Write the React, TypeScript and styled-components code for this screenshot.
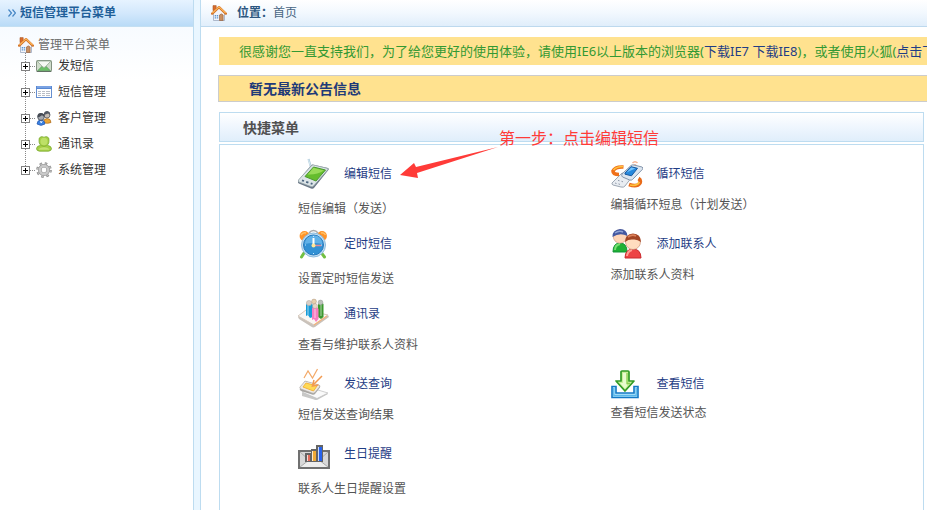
import React from "react";
import styled, { createGlobalStyle } from "styled-components";

const GlobalStyle = createGlobalStyle`
  * { box-sizing: border-box; }
  body {
    margin: 0;
    background: #fff;
    color: #555;
    font: 12px/18px "Noto Sans", "Noto Sans CJK SC", sans-serif;
    overflow: hidden;
  }
  a { color: inherit; text-decoration: none; }
  svg { display: block; flex: none; }
`;

const Page = styled.div`
  display: grid;
  grid-template-columns: 194px 6px minmax(0, 1fr);
  height: 100vh;
`;

const Sidebar = styled.aside`
  border-right: 1px solid #bddcf0;
  background: linear-gradient(#f3f9ff, #fff 80px);
`;

const Splitter = styled.div`
  background: #e9f6ff;
`;

const Main = styled.main`
  display: flex;
  flex-direction: column;
  border-left: 1px solid #bddcf0;
  overflow: hidden;
`;

const SidebarHeader = styled.header`
  display: flex;
  align-items: center;
  gap: 4px;
  height: 27px;
  padding-left: 8px;
  border-bottom: 1px solid #c3dff2;
  background: linear-gradient(#e6f3ff, #d3e8fc 50%, #b9dbf7);
`;

const SidebarTitle = styled.h1`
  margin: 0;
  color: #1f5f99;
  font-size: 12px;
  line-height: 18px;
`;

const Tree = styled.nav`
  padding: 10px 0 0 18px;
  color: #333;
`;

const TreeRoot = styled.div`
  display: flex;
  align-items: center;
  gap: 4px;
  height: 16px;
  color: #6b6b6b;
  line-height: 16px;
`;

const TreeList = styled.ul`
  margin: 0;
  padding: 0;
  list-style: none;
`;

const TreeItem = styled.li`
  display: flex;
  align-items: center;
  height: 26px;
`;

const TreeBranch = styled.span<{ $last: boolean }>`
  width: 18px;
  height: 26px;
  padding: 9px 0 0 3px;
  background:
    repeating-linear-gradient(#888 0 1px, transparent 1px 2px) 7px 0 / 1px ${(p) => (p.$last ? "13px" : "26px")} no-repeat,
    repeating-linear-gradient(90deg, #888 0 1px, transparent 1px 2px) 12px 13px / 6px 1px no-repeat;
`;

const Toggle = styled.button`
  display: block;
  width: 9px;
  height: 9px;
  padding: 0;
  border: 1px solid #808080;
  background:
    linear-gradient(#000, #000) center / 5px 1px no-repeat,
    linear-gradient(#000, #000) center / 1px 5px no-repeat,
    #fff;
`;

const TreeLink = styled.a`
  display: flex;
  align-items: center;
  gap: 6px;
`;

const LocationBar = styled.header`
  display: flex;
  align-items: center;
  flex: none;
  gap: 10px;
  height: 27px;
  padding-left: 10px;
  border-bottom: 1px solid #bdd9ee;
  background: linear-gradient(#fff, #f2f8fe 50%, #e0eefb);
  color: #476583;
`;

const LocationLabel = styled.strong`
  color: #2c5680;
`;

const Thanks = styled.p`
  flex: none;
  height: 28px;
  margin: 10px 0 0 18px;
  padding-left: 20px;
  background: #ffe28f;
  color: #339933;
  font-size: 13px;
  line-height: 28px;
  white-space: nowrap;
`;

const NoticeLink = styled.a`
  color: #1f3d85;
`;

const Announcement = styled.p`
  flex: none;
  height: 27px;
  margin: 10px 0 0 17px;
  padding-left: 30px;
  border: 1px solid #ccc;
  border-right: 0;
  background: #ffe28f;
  color: #1f3a78;
  font-size: 14px;
  font-weight: 700;
  line-height: 26px;
`;

const PanelTitle = styled.h2`
  flex: none;
  height: 30px;
  margin: 10px 3px 0 18px;
  padding-left: 23px;
  border: 1px solid #bddcf0;
  background: linear-gradient(#fff, #eff6fe 50%, #e0eefb);
  color: #505050;
  font-size: 14px;
  line-height: 30px;
`;

const PanelBody = styled.section`
  position: relative;
  flex: 1 0 auto;
  margin: 2px 3px 0 18px;
  padding: 13px 0 0 78px;
  border: 1px solid #bddcf0;
  border-bottom: 0;
`;

const Shortcuts = styled.div`
  display: grid;
  grid-template-columns: 1fr 1fr;
  grid-auto-rows: 70px;
`;

const Shortcut = styled.div<{ $column: number; $gap: number }>`
  display: flex;
  flex-direction: column;
  grid-column: ${(p) => p.$column};
  gap: ${(p) => p.$gap}px;
`;

const ShortcutLink = styled.a`
  display: flex;
  align-items: center;
  gap: 14px;
  height: 32px;
  color: #1f3d85;
`;

const Annotation = styled.div`
  position: absolute;
  top: -19px;
  left: 180px;
  display: flex;
  align-items: flex-start;
  color: #ff3b38;
  font-size: 16px;
  line-height: 24px;
  white-space: nowrap;
  pointer-events: none;
`;

const HomeIcon = () => (
  <svg width="16" height="16" viewBox="0 0 16 16" aria-hidden="true">
    <path d="M2 .6h3.2v5H2z" fill="#d96b2b" stroke="#a95726" strokeWidth=".6" />
    <path d="M2.5 8 8 3l5.5 5v7.5h-11z" fill="#f3f5fa" stroke="#9caac0" strokeWidth=".8" />
    <path d="M1.2 8.6 8 2.2l6.8 6.4" fill="none" stroke="#d27327" strokeWidth="2.4" strokeLinejoin="round" strokeLinecap="round" />
    <path d="M1.4 8 8 1.9 14.6 8" fill="none" stroke="#ffb75b" strokeWidth="1.1" />
    <path d="M8.5 15.5V10q1.8-2.2 3.6 0v5.5z" fill="#c99062" stroke="#9a6642" strokeWidth=".7" />
    <path d="M3.7 10h1.4v1.4H3.7zm2.1 0h1.4v1.4H5.8zm-2.1 2.2h1.4v1.4H3.7zm2.1 0h1.4v1.4H5.8z" fill="#5a96d2" />
  </svg>
);

const ChevronIcon = () => (
  <svg width="8" height="8" viewBox="0 0 8 8" aria-hidden="true">
    <path d="m.5.5 3 3.5-3 3.5M4.5.5l3 3.5-3 3.5" fill="none" stroke="#4686c4" strokeWidth="1.2" />
  </svg>
);

const MailIcon = () => (
  <svg width="16" height="16" viewBox="0 0 16 16" aria-hidden="true">
    <rect x=".5" y="2.5" width="15" height="11" rx="1" fill="#cfdccb" stroke="#829081" />
    <path d="m1.5 12.8 5-5q1.5 1.2 3 0l5 5z" fill="#6cc067" stroke="#53905a" strokeWidth=".6" />
    <path d="M1 3h14L9.2 9q-1.2 1-2.4 0z" fill="#f5f9f4" stroke="#91a790" strokeWidth=".8" />
    <path d="M.8 13.5h14.4" stroke="#637064" />
  </svg>
);

const TableIcon = () => (
  <svg width="16" height="16" viewBox="0 0 16 16" aria-hidden="true">
    <rect x=".5" y="2.5" width="15" height="11" fill="#fff" stroke="#668fd0" />
    <path d="M0 2h16v3H0z" fill="#5888d3" />
    <path d="M1 3h14" stroke="#9cbdf2" />
    <path d="M2 7h3v1H2zm4 0h3v1H6zm4 0h4v1h-4zM2 9h3v1H2zm4 0h3v1H6zm4 0h4v1h-4zM2 11h3v1H2zm4 0h3v1H6zm4 0h4v1h-4z" fill="#b9bdc5" />
  </svg>
);

const CustomersIcon = () => (
  <svg width="16" height="16" viewBox="0 0 16 16" aria-hidden="true">
    <path d="M7.5 12.5q0-4 3.7-4 3.6 0 3.8 4-3.7 1.7-7.5 0" fill="#eda735" stroke="#aa681e" strokeWidth=".7" />
    <circle cx="11" cy="5" r="3" fill="#c6bdb5" stroke="#454b53" strokeWidth=".7" />
    <path d="M8 5Q7.7 1 11.3 1q3.2.4 2.8 4l-2-1.5z" fill="#535963" />
    <path d="M1 14q.2-4 4-4t4 4q-4 2.8-8 0" fill="#3b82e2" stroke="#2756ac" strokeWidth=".7" />
    <circle cx="5" cy="7" r="3.3" fill="#a5a9af" stroke="#3b414a" strokeWidth=".7" />
    <path d="M1.6 7.2Q1 3 4.9 3q3.8 0 3.7 4L6 5.2 3.3 7z" fill="#464b54" />
    <path d="m4.5 11 .7 2 1-2" stroke="#e8f2ff" fill="none" />
  </svg>
);

const ContactsIcon = () => (
  <svg width="16" height="16" viewBox="0 0 16 16" aria-hidden="true">
    <path d="M.5 12.5q.3-2.6 4.2-3.2Q2.6 7.2 3 4.4 2.6 1.4 5 .8q1.6-.5 3 .5Q9.400.3 11 .8q2.400.6 2 3.600.4 2.800-1.700 4.900 3.900.6 4.200 3.200.1 2.300-3 2.700h-9q-3.100-.4-3-2.700" fill="#a5cf45" stroke="#7eac36" strokeWidth=".8" />
    <ellipse cx="8" cy="5.500" rx="3.500" ry="3.700" fill="#bde067" />
    <path d="M2.500 13.800q1-2.600 5.500-2.600t5.500 2.600z" fill="#c4e272" />
    <path d="M5.300 9.600q2.700 1.500 5.400 0" stroke="#7fac2c" fill="none" strokeWidth=".8" />
  </svg>
);

const GearIcon = () => (
  <svg width="16" height="16" viewBox="0 0 16 16" aria-hidden="true">
    <circle cx="8" cy="8" r="6.4" fill="none" stroke="#8b8b8b" strokeWidth="2.8" strokeDasharray="2.4 2.627" />
    <circle cx="8" cy="8" r="4.2" fill="none" stroke="#909090" strokeWidth="3.6" />
    <circle cx="8" cy="8" r="4.1" fill="none" stroke="#c9c9c9" strokeWidth="2.6" />
    <circle cx="8" cy="8" r="6.4" fill="none" stroke="#bdbdbd" strokeWidth="1.6" strokeDasharray="1.4 3.627" strokeDashoffset="-.5" />
  </svg>
);

const PdaIcon = () => (
  <svg width="32" height="32" viewBox="0 0 32 32" aria-hidden="true">
    <path d="m13.5 11-3-10" stroke="#a9c7d8" strokeWidth="2" />
    <path d="m13 10-2.500-8.500" stroke="#e8f5fb" strokeWidth=".8" />
    <path d="M0 22.500 13 7.500q1-1.200 2.500-.8L30 10q1.300.6.4 2L16 30q-1 1.200-3 .5L.8 25.500Q-.5 24.500 0 22.500" fill="#6b7887" />
    <path d="M.5 22 13.500 7.700q1-.9 2.200-.6L29.500 10.400q1 .6.2 1.400L15.500 28q-.8 1-2.500.5L1 24Q0 23.300.5 22" fill="#dce4e7" stroke="#9baaae" strokeWidth=".7" />
    <path d="m7 18.500 8.500-9.500 12 3-9.500 11z" fill="#65bd2d" stroke="#4b9930" />
    <path d="m9.500 16.500 6-6.800 10.500 2.800q-7 4.600-16.500 4" fill="#98db58" />
    <path d="m4 22.300 2 .7m2.200.8 2.200.8m2.300.7 1.800.6" stroke="#4b657f" strokeWidth="1.800" />
  </svg>
);

const SyncPhoneIcon = () => (
  <svg width="32" height="32" viewBox="0 0 32 32" aria-hidden="true">
    <path d="M21.500 5q2.500-2.500 5 0M23 7.200q1-1 2 0" fill="none" stroke="#f6b595" strokeWidth="1.500" />
    <path d="M12.500 9Q4 8.500 2 13q0 3.500 6 3.500" fill="none" stroke="#ef701a" strokeWidth="3.600" />
    <path d="M12 8.500Q5.500 8.500 2.500 12" fill="none" stroke="#ffc23c" strokeWidth="1.600" />
    <path d="M18 26.500q8 3 11-1.500 1-3-1.500-4.500" fill="none" stroke="#e86a19" strokeWidth="3.800" />
    <path d="M19 27q7 1.500 9.500-3" fill="none" stroke="#ffc23c" strokeWidth="1.600" />
    <path d="m1 25 10-10 11 2.500-8 10.500q-1.400 1.800-4 1L2 27q-1.400-.6-1-2" fill="#e9edf2" stroke="#9ea8b4" />
    <path d="m11 16 9-8.500q1-1 3-.5l8 2q1.700.8.6 2.200L21.500 21.500q-1 1-2.800.5L11.600 19q-1.500-.9-.6-3" fill="#dce5ef" stroke="#8496ac" />
    <path d="m14 15 6-6.300 6.500 1.600-6 7.500-6.500-1.600z" fill="#2688dc" stroke="#17589f" />
    <path d="m15.500 14.500 4.800-4.900 4 1z" fill="#74c4ff" />
    <path d="m4 25 1.500.5m2 .4 1.500.5m-2-4 1.500.4m2 .5 1.500.5" stroke="#929baa" />
  </svg>
);

const AlarmIcon = () => (
  <svg width="32" height="32" viewBox="0 0 32 32" aria-hidden="true">
    <path d="M6 25 3.500 29m20-4 3 4" stroke="#72bf43" strokeWidth="3" strokeLinecap="round" />
    <path d="M11 5q2-2.500 4.500-2.500T20 5" fill="none" stroke="#aaa" strokeWidth="1.500" />
    <circle cx="6.500" cy="8" r="4.900" fill="#ff9328" />
    <circle cx="24" cy="8" r="4.900" fill="#ff9328" />
    <path d="M3 7q2-3 5-2m15 0q3-.7 4.500 2" fill="none" stroke="#ffc267" strokeWidth="1.500" />
    <circle cx="15.500" cy="17" r="12" fill="#c5dff1" stroke="#8bbadd" />
    <circle cx="15.500" cy="17" r="10" fill="#3291d4" stroke="#2478bd" />
    <path d="M6.500 16q1-8 9-8.500t9 8.500q-9-2-18 0" fill="#60b1e8" />
    <path d="M15.500 17v-7" stroke="#fff" strokeWidth="2" />
    <path d="M15.500 17.500h8" stroke="#e08b98" strokeWidth="1.500" />
    <circle cx="15.500" cy="17.500" r="2" fill="#ffe899" />
    <path d="M15.500 8v1m0 16v1M7 17h1m15 0h1" stroke="#c6eaff" />
  </svg>
);

const PeopleIcon = () => (
  <svg width="32" height="32" viewBox="0 0 32 32" aria-hidden="true">
    <path d="M2 24q0-9 7-9t7 9z" fill="#1fb035" stroke="#109538" />
    <path d="M4 22q0-5 5-6" fill="none" stroke="#76df70" strokeWidth="2" />
    <circle cx="9" cy="8.500" r="6.700" fill="#ffd5b7" stroke="#c69079" strokeWidth=".6" />
    <path d="M1.500 9Q1 2 9 1q7.200.4 7.500 7-7.500-4-15 1" fill="#4459a1" />
    <path d="M4 5q4-3 8-1" fill="none" stroke="#91a4d4" strokeWidth="1.500" />
    <path d="M14 30q.2-9 8-9t8 9z" fill="#ed4345" stroke="#ca2a2e" />
    <path d="M16 28q.5-5 5-6" fill="none" stroke="#ff9f94" strokeWidth="2" />
    <circle cx="22" cy="14" r="7.500" fill="#ffdcbf" stroke="#c2866b" strokeWidth=".6" />
    <path d="M14 14Q14 6 22 5.500q7.800.4 8 8.500-4-3-8-2.400-4-.5-8 2.400" fill="#a34525" />
    <path d="M17 9q4-3 8-1" fill="none" stroke="#dc815a" strokeWidth="1.700" />
  </svg>
);

const AddressBookIcon = () => (
  <svg width="32" height="32" viewBox="0 0 32 32" aria-hidden="true">
    <path d="m0 19 8-5 22 3 1 2-14 10q-2 1-4-.5L1 21z" fill="#c9c2bb" />
    <path d="m0 18 8-6 22 5-14 10z" fill="#faf7f4" stroke="#d4c7bb" />
    <path d="M8 7q0-2 3-2t4 2v12l-3 1-2-3-2 1z" fill="#169bd8" />
    <path d="M20 7q0-2 3-2t2.500 2v12l-2.500 2-3-2z" fill="#3b982e" />
    <path d="M14 11q0-2.300 3-2.300t3.500 2.300v10l-2.500 3-2-3-2 1z" fill="#f77cc0" />
    <path d="M10 7v10m7-6v9m6-13v11" stroke="#fff" strokeOpacity=".4" strokeWidth="1.500" />
    <circle cx="11" cy="5" r="2.600" fill="#d8cec5" stroke="#b3a79c" strokeWidth=".5" />
    <circle cx="17" cy="8" r="2.500" fill="#e8d6c5" stroke="#b3a292" strokeWidth=".5" />
    <circle cx="16" cy="3.500" r="2.400" fill="#e8d0ae" stroke="#aa947d" strokeWidth=".5" />
    <circle cx="22.500" cy="4.500" r="2.400" fill="#bec2bd" stroke="#969696" strokeWidth=".5" />
    <path d="m16 27 13-9" stroke="#f3b37c" strokeWidth="1.400" />
  </svg>
);

const QueryIcon = () => (
  <svg width="32" height="32" viewBox="0 0 32 32" aria-hidden="true">
    <path d="m4 25 6-5 20 6-10 5.500q-2 1-4 0L4 28z" fill="#c8c8c7" />
    <path d="m4 24 6-5 20 6-11 5.500z" fill="#fafafa" stroke="#bdbdbd" strokeWidth=".7" />
    <path d="m2 20 5-7 14 4q2 .8 1 2.500L17 26q-1 1.200-3 .6L3 23q-2-1-1-3" fill="#a9a7a3" />
    <path d="m2 19 5-6 14 4q1.300.6.5 2L17 24.500q-1 1-3 .5L3 21q-2-.8-1-2" fill="#ece9e5" stroke="#aaa5a0" strokeWidth=".6" />
    <path d="m5 19 3-4 11 3-3.500 5z" fill="#ffda55" stroke="#f5b53c" />
    <path d="m6 10 4-7 4.500 7 5-9" fill="none" stroke="#f3a968" strokeWidth="1.200" />
    <path d="m24 8-9 9m1-5-1.600 6 6-1" fill="none" stroke="#f29a50" strokeWidth="1.500" />
  </svg>
);

const DownloadIcon = () => (
  <svg width="32" height="32" viewBox="0 -2 32 32" aria-hidden="true">
    <path d="M1 16.500h4V23h18v-6.500h4v11H1z" fill="#b7e7fc" stroke="#1379c5" strokeWidth="1.600" />
    <path d="M2.800 18v7.500h22.400V18" fill="none" stroke="#58b7ea" strokeWidth="1.300" />
    <path d="M10 2q0-1 1-1h6q1 0 1 1v9h5l-9 10-9-10h5z" fill="#c9ef9c" stroke="#329b26" strokeWidth="1.700" strokeLinejoin="round" />
    <path d="M12 3v10H9l5 5.500 2-2.500V3z" fill="#e9fbcf" />
    <path d="M16 3v10.500h3" fill="none" stroke="#89ce50" strokeWidth="1.300" />
  </svg>
);

const BirthdayIcon = () => (
  <svg width="32" height="32" viewBox="0 0 32 32" aria-hidden="true">
    <rect x="1" y="13" width="30" height="17" fill="#d8d8d8" stroke="#707070" strokeWidth="2" />
    <path d="m2 29 9-7h10l9 7z" fill="#ededed" />
    <path d="m2 29 9-7h10l9 7M2 14l9 8m19-8-9 8" fill="none" stroke="#aaa" />
    <path d="M7 15h6v-4h5V7h7v17H7z" fill="#646464" />
    <path d="M9 17h3v6H9z" fill="#e36c5b" />
    <path d="M14 13h4v10h-4z" fill="#efa936" />
    <path d="M20 9h4v14h-4z" fill="#2763ed" />
    <path d="M9 17h1v6H9zm5-4h1v10h-1zm6-4h1v14h-1z" fill="#fff" fillOpacity=".75" />
  </svg>
);

const ArrowIcon = () => (
  <svg width="99" height="56" viewBox="0 0 99 56" aria-hidden="true">
    <path d="m0 49 14-12 2 4 82-20-81 26 1 5z" fill="#ff3b38" />
  </svg>
);

const treeItems = [
  { label: "发短信", icon: <MailIcon /> },
  { label: "短信管理", icon: <TableIcon /> },
  { label: "客户管理", icon: <CustomersIcon /> },
  { label: "通讯录", icon: <ContactsIcon /> },
  { label: "系统管理", icon: <GearIcon /> },
];

const shortcuts = [
  { title: "编辑短信", text: "短信编辑（发送）", column: 1, gap: 10, icon: <PdaIcon /> },
  { title: "循环短信", text: "编辑循环短息（计划发送）", column: 2, gap: 6, icon: <SyncPhoneIcon /> },
  { title: "定时短信", text: "设置定时短信发送", column: 1, gap: 10, icon: <AlarmIcon /> },
  { title: "添加联系人", text: "添加联系人资料", column: 2, gap: 6, icon: <PeopleIcon /> },
  { title: "通讯录", text: "查看与维护联系人资料", column: 1, gap: 6, icon: <AddressBookIcon /> },
  { title: "发送查询", text: "短信发送查询结果", column: 1, gap: 6, icon: <QueryIcon /> },
  { title: "查看短信", text: "查看短信发送状态", column: 2, gap: 4, icon: <DownloadIcon /> },
  { title: "生日提醒", text: "联系人生日提醒设置", column: 1, gap: 10, icon: <BirthdayIcon /> },
];

export default function App() {
  return (
    <>
      <GlobalStyle />
      <Page lang="zh-CN">
        <Sidebar>
          <SidebarHeader>
            <ChevronIcon />
            <SidebarTitle>短信管理平台菜单</SidebarTitle>
          </SidebarHeader>
          <Tree>
            <TreeRoot>
              <HomeIcon />
              管理平台菜单
            </TreeRoot>
            <TreeList>
              {treeItems.map((item, i) => (
                <TreeItem key={item.label}>
                  <TreeBranch $last={i === treeItems.length - 1}>
                    <Toggle type="button" aria-label={item.label} aria-expanded="false" />
                  </TreeBranch>
                  <TreeLink href="#">
                    {item.icon}
                    {item.label}
                  </TreeLink>
                </TreeItem>
              ))}
            </TreeList>
          </Tree>
        </Sidebar>
        <Splitter />
        <Main>
          <LocationBar>
            <HomeIcon />
            <span>
              <LocationLabel>位置：</LocationLabel>首页
            </span>
          </LocationBar>
          <Thanks>
            很感谢您一直支持我们，为了给您更好的使用体验，请使用IE6以上版本的浏览器(
            <NoticeLink href="#">下载IE7</NoticeLink> <NoticeLink href="#">下载IE8</NoticeLink>
            )，或者使用火狐(<NoticeLink href="#">点击下载</NoticeLink>)
          </Thanks>
          <Announcement>暂无最新公告信息</Announcement>
          <PanelTitle>快捷菜单</PanelTitle>
          <PanelBody>
            <Shortcuts>
              {shortcuts.map((s) => (
                <Shortcut key={s.title} $column={s.column} $gap={s.gap}>
                  <ShortcutLink href="#">
                    {s.icon}
                    {s.title}
                  </ShortcutLink>
                  <span>{s.text}</span>
                </Shortcut>
              ))}
            </Shortcuts>
            <Annotation>
              <ArrowIcon />
              第一步：点击编辑短信
            </Annotation>
          </PanelBody>
        </Main>
      </Page>
    </>
  );
}
